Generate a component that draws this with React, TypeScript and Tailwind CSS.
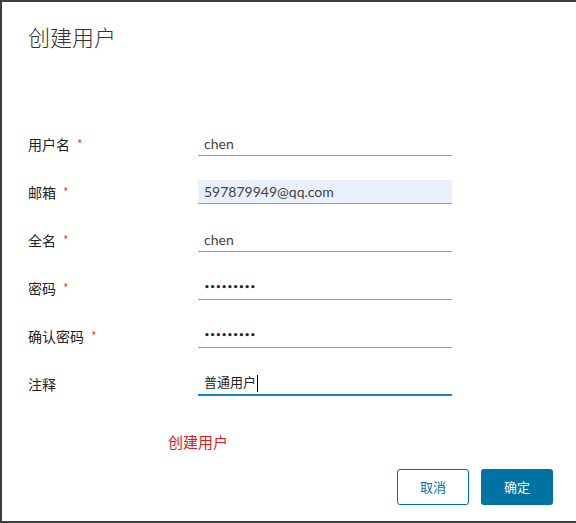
import React from 'react';

const labelFont = { fontFamily: '"Noto Sans CJK SC", "Noto Sans", sans-serif' };

function Row({ label, required, children }: { label: string; required?: boolean; children: React.ReactNode }) {
  return (
    <div className="flex items-center h-6">
      <div className="w-[170px] text-[14px] text-[#222] flex items-center">
        <span>{label}</span>
        {required && <span className="ml-[7px] text-[#d9574a] text-[12px] leading-none">*</span>}
      </div>
      {children}
    </div>
  );
}

function Field({ value, fill, dots, active }: { value: string; fill?: boolean; dots?: boolean; active?: boolean }) {
  return (
    <div
      className={`w-[254px] h-6 flex items-center pl-[6px] ${
        active ? 'border-b-2 border-[#0a8ac0] text-[13px]' : 'border-b border-[#9a9a9a] text-[14px]'
      } ${fill ? 'bg-[#e8f0fe]' : ''} ${dots || active ? 'text-[#222]' : 'text-[#444]'}`}
      style={{ fontFamily: dots ? '"DejaVu Sans", sans-serif' : '"Lato", "Noto Sans CJK SC", sans-serif' }}
    >
      {dots ? <span className="text-[9px] font-bold">•••••••••</span> : value}
      {active && <span className="w-px h-[17px] bg-black ml-px" />}
    </div>
  );
}

export default function App() {
  return (
    <div
      className="w-[576px] h-[523px] bg-white border-t-2 border-l-2 border-b-2 border-[#3f3f3f] flex flex-col pl-[26px] pr-[23px]"
      style={labelFont}
    >
      <h1 className="mt-[20px] text-[22px] leading-7 font-light text-[#333]">创建用户</h1>
      <div className="mt-[82px] flex flex-col gap-6">
        <Row label="用户名" required>
          <Field value="chen" />
        </Row>
        <Row label="邮箱" required>
          <Field value="597879949@qq.com" fill />
        </Row>
        <Row label="全名" required>
          <Field value="chen" />
        </Row>
        <Row label="密码" required>
          <Field value="" dots />
        </Row>
        <Row label="确认密码" required>
          <Field value="" dots />
        </Row>
        <Row label="注释">
          <Field value="普通用户" active />
        </Row>
      </div>
      <div className="mt-[36px] pl-[140px] text-[15px] leading-5 text-[#e0191f]">创建用户</div>
      <div className="mt-[17px] flex justify-end gap-3">
        <button className="w-[72px] h-9 rounded-[3px] border border-[#0072a3] text-[#0072a3] text-[13px] bg-white">
          取消
        </button>
        <button className="w-[72px] h-9 rounded-[3px] bg-[#0072a3] text-white text-[13px]">确定</button>
      </div>
    </div>
  );
}
